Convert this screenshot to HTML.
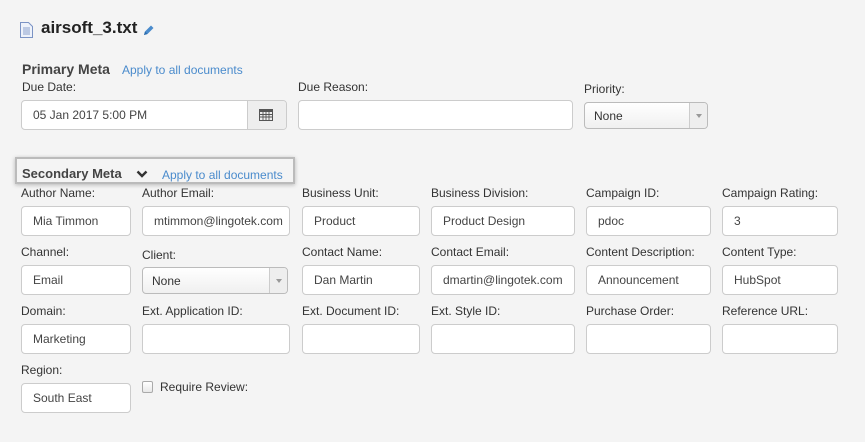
<!DOCTYPE html>
<html><head><style>
*{box-sizing:border-box;margin:0;padding:0}
body{width:865px;height:442px;background:#f4f4f4;font-family:"Liberation Sans",Arial,sans-serif;color:#333;position:relative;overflow:hidden}
.a{position:absolute;white-space:nowrap}
.l{font-size:12px;color:#333}
.i{position:absolute;background:#fff;border:1px solid #ccc;border-radius:4px;font-size:12px;color:#444;padding-left:11px;display:flex;align-items:center;height:30px}
.s{position:absolute;background:linear-gradient(#fff,#f0f0f0);border:1px solid #bbb;border-radius:4px;font-size:12px;color:#333;padding-left:9px;display:flex;align-items:center;height:27px}
.s .b{position:absolute;right:0;top:0;bottom:0;width:18px;border-left:1px solid #ccc;background:#eee;border-radius:0 3px 3px 0}
.s .b:after{content:"";position:absolute;left:6px;top:11px;border:3px solid transparent;border-top:4px solid #999}
.lk{color:#4a8bcc;font-size:12px}
</style></head><body>
<svg class="a" style="left:20px;top:22px" width="13" height="16" viewBox="0 0 13 16"><path d="M.5.5h8l4 4v11H.5z" fill="#eef2fa" stroke="#7b93c4"/><path d="M3 6h7M3 8h7M3 10h7M3 12h7" stroke="#8aa0cc"/></svg>
<div class="a" style="left:41px;top:18px;font-size:17px;font-weight:bold;color:#222">airsoft_3.txt</div>
<svg class="a" style="left:143px;top:24px" width="12" height="12" viewBox="0 0 12 12"><path d="M1 11l1-3.5 6-6 2.5 2.5-6 6z" fill="#4a8bcc"/><path d="M1 11l1-3.5 2.5 2.5z" fill="#2a6bac"/></svg>
<div class="a" style="left:22px;top:61px;font-size:14px;font-weight:bold;color:#444">Primary Meta</div>
<div class="a lk" style="left:122px;top:63px">Apply to all documents</div>
<div class="a l" style="left:22px;top:80px">Due Date:</div>
<div class="i" style="left:21px;top:100px;width:266px">05 Jan 2017 5:00 PM</div>
<div class="a" style="left:247px;top:101px;width:39px;height:28px;background:#eee;border-left:1px solid #ccc;border-radius:0 3px 3px 0"></div>
<svg class="a" style="left:259px;top:108px" width="14" height="13" viewBox="0 0 14 13"><rect x="0" y="1" width="14" height="12" fill="#555"/><path d="M1 4h12v8H1z" fill="#eee"/><path d="M1 6.5h12M1 9h12M4 4v8M7 4v8M10 4v8" stroke="#555" stroke-width=".9"/></svg>
<div class="a l" style="left:298px;top:80px">Due Reason:</div>
<div class="i" style="left:298px;top:100px;width:275px"></div>
<div class="a l" style="left:584px;top:82px">Priority:</div>
<div class="s" style="left:584px;top:102px;width:124px">None<span class="b"></span></div>
<div class="a" style="left:15px;top:157px;width:280px;height:27px;border:2px solid #bbb;box-shadow:0 1px 4px rgba(0,0,0,.25)"></div>
<div class="a" style="left:22px;top:166px;font-size:13px;font-weight:bold;color:#444">Secondary Meta</div>
<svg class="a" style="left:136px;top:170px" width="12" height="8" viewBox="0 0 12 8"><path d="M1.5 1.5l4.5 4.5 4.5-4.5" fill="none" stroke="#333" stroke-width="2.4"/></svg>
<div class="a lk" style="left:162px;top:168px">Apply to all documents</div>

<div class="a l" style="left:21px;top:186px">Author Name:</div>
<div class="a l" style="left:142px;top:186px">Author Email:</div>
<div class="a l" style="left:302px;top:186px">Business Unit:</div>
<div class="a l" style="left:431px;top:186px">Business Division:</div>
<div class="a l" style="left:586px;top:186px">Campaign ID:</div>
<div class="a l" style="left:722px;top:186px">Campaign Rating:</div>
<div class="i" style="left:21px;top:206px;width:110px">Mia Timmon</div>
<div class="i" style="left:142px;top:206px;width:148px">mtimmon@lingotek.com</div>
<div class="i" style="left:302px;top:206px;width:118px">Product</div>
<div class="i" style="left:431px;top:206px;width:144px">Product Design</div>
<div class="i" style="left:586px;top:206px;width:125px">pdoc</div>
<div class="i" style="left:722px;top:206px;width:116px">3</div>

<div class="a l" style="left:21px;top:245px">Channel:</div>
<div class="a l" style="left:142px;top:248px">Client:</div>
<div class="a l" style="left:302px;top:245px">Contact Name:</div>
<div class="a l" style="left:431px;top:245px">Contact Email:</div>
<div class="a l" style="left:586px;top:245px">Content Description:</div>
<div class="a l" style="left:722px;top:245px">Content Type:</div>
<div class="i" style="left:21px;top:265px;width:110px">Email</div>
<div class="s" style="left:142px;top:267px;width:146px">None<span class="b"></span></div>
<div class="i" style="left:302px;top:265px;width:118px">Dan Martin</div>
<div class="i" style="left:431px;top:265px;width:144px">dmartin@lingotek.com</div>
<div class="i" style="left:586px;top:265px;width:125px">Announcement</div>
<div class="i" style="left:722px;top:265px;width:116px">HubSpot</div>

<div class="a l" style="left:21px;top:304px">Domain:</div>
<div class="a l" style="left:142px;top:304px">Ext. Application ID:</div>
<div class="a l" style="left:302px;top:304px">Ext. Document ID:</div>
<div class="a l" style="left:431px;top:304px">Ext. Style ID:</div>
<div class="a l" style="left:586px;top:304px">Purchase Order:</div>
<div class="a l" style="left:722px;top:304px">Reference URL:</div>
<div class="i" style="left:21px;top:324px;width:110px">Marketing</div>
<div class="i" style="left:142px;top:324px;width:148px"></div>
<div class="i" style="left:302px;top:324px;width:118px"></div>
<div class="i" style="left:431px;top:324px;width:144px"></div>
<div class="i" style="left:586px;top:324px;width:125px"></div>
<div class="i" style="left:722px;top:324px;width:116px"></div>

<div class="a l" style="left:21px;top:363px">Region:</div>
<div class="i" style="left:21px;top:383px;width:110px">South East</div>
<div class="a" style="left:142px;top:381px;width:11px;height:12px;border:1px solid #aaa;border-radius:2px;background:linear-gradient(#fff,#e8e8e8)"></div>
<div class="a l" style="left:160px;top:380px">Require Review:</div>
</body></html>
